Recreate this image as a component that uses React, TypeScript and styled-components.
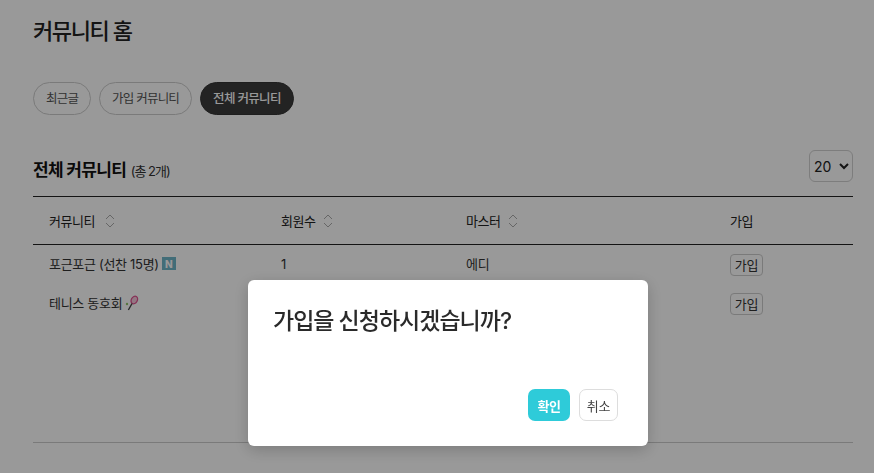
import React from "react";
import styled, { createGlobalStyle } from "styled-components";

const rows = [
  { name: "포근포근 (선찬 15명)", badge: "new", members: "1", master: "에디" },
  { name: "테니스 동호회", badge: "racket", members: "", master: "" },
];

const SortIcon = ({ wide }: { wide?: boolean }) => (
  <SortSvg $wide={wide} width="12" height="16" viewBox="0 0 12 16" fill="none">
    <path d="M2 6l4-4 4 4" stroke="#aaa" strokeWidth="1" />
    <path d="M2 10l4 4 4-4" stroke="#aaa" strokeWidth="1" />
  </SortSvg>
);

const RacketIcon = () => (
  <svg width="14" height="16" viewBox="0 0 14 16" fill="none">
    <circle cx="2" cy="9" r="1.2" fill="#8fc46a" />
    <ellipse cx="9.3" cy="5" rx="3" ry="4" transform="rotate(30 9.3 5)" stroke="#e0508f" strokeWidth="1.3" fill="#f6c6da" />
    <path d="M7 8.5L3.4 15" stroke="#444" strokeWidth="1.4" />
  </svg>
);

export default function App() {
  return (
    <>
      <GlobalStyle />
      <Page>
        <Title>커뮤니티 홈</Title>
        <Tabs>
          <Tab>최근글</Tab>
          <Tab>가입 커뮤니티</Tab>
          <Tab $active>전체 커뮤니티</Tab>
        </Tabs>
        <ListHead>
          <ListTitle>
            전체 커뮤니티 <small>(총 2개)</small>
          </ListTitle>
          <PageSize defaultValue="20">
            <option>20</option>
            <option>50</option>
          </PageSize>
        </ListHead>
        <Table>
          <colgroup>
            <col style={{ width: 232 }} />
            <col style={{ width: 185 }} />
            <col style={{ width: 264 }} />
            <col />
          </colgroup>
          <thead>
            <tr>
              <Th>
                커뮤니티 <SortIcon wide />
              </Th>
              <Th>
                회원수 <SortIcon />
              </Th>
              <Th>
                마스터 <SortIcon />
              </Th>
              <Th>가입</Th>
            </tr>
          </thead>
          <tbody>
            {rows.map((row) => (
              <tr key={row.name}>
                <Td>
                  <Name>
                    {row.name}
                    {row.badge === "new" ? <NewBadge>N</NewBadge> : <RacketIcon />}
                  </Name>
                </Td>
                <Td>{row.members}</Td>
                <Td>{row.master}</Td>
                <Td>
                  <JoinButton>가입</JoinButton>
                </Td>
              </tr>
            ))}
          </tbody>
        </Table>
        <Footer />
      </Page>
      <Overlay>
        <Modal>
          <ModalText>가입을 신청하시겠습니까?</ModalText>
          <ModalActions>
            <ConfirmButton>확인</ConfirmButton>
            <CancelButton>취소</CancelButton>
          </ModalActions>
        </Modal>
      </Overlay>
    </>
  );
}

const GlobalStyle = createGlobalStyle`
  html, body {
    margin: 0;
    height: 100%;
    overflow: hidden;
    background: #fff;
    font-family: Inter, "Noto Sans CJK KR", sans-serif;
    color: #222;
  }
`;

const Page = styled.div`
  height: 473px;
  padding: 0 21px 0 33px;
  box-sizing: border-box;
  display: flex;
  flex-direction: column;
`;

const Title = styled.h1`
  margin: 16px 0 0;
  font-size: 22px;
  line-height: 30px;
  font-weight: 500;
  letter-spacing: -1.4px;
  color: #222;
`;

const Tabs = styled.div`
  display: flex;
  gap: 8px;
  margin-top: 36px;
`;

const Tab = styled.button<{ $active?: boolean }>`
  height: 33px;
  padding: 0 12px 2px;
  border-radius: 17px;
  border: 1px solid ${(p) => (p.$active ? "#333" : "#ccc")};
  background: ${(p) => (p.$active ? "#3b3b3b" : "#fff")};
  color: ${(p) => (p.$active ? "#fff" : "#555")};
  font: ${(p) => (p.$active ? 500 : 400)} 12.5px Inter, "Noto Sans CJK KR", sans-serif;
  letter-spacing: ${(p) => (p.$active ? -0.65 : -0.8)}px;
`;

const ListHead = styled.div`
  display: flex;
  justify-content: space-between;
  align-items: flex-start;
  margin-top: 35px;
  height: 46px;
`;

const ListTitle = styled.h2`
  margin: 8px 0 0;
  font-size: 17px;
  line-height: 24px;
  font-weight: 700;
  letter-spacing: -0.65px;
  color: #111;

  small {
    margin-left: 1px;
    font-size: 13px;
    font-weight: 400;
    letter-spacing: -1px;
    color: #333;
  }
`;

const PageSize = styled.select`
  width: 44px;
  height: 32px;
  padding: 0;
  border: 1px solid #d0d0d0;
  border-radius: 6px;
  background: #fff;
  color: #222;
  font: 14px Inter, sans-serif;
`;

const Table = styled.table`
  width: 820px;
  border-collapse: collapse;
  table-layout: fixed;
  border-top: 1px solid #222;
`;

const Th = styled.th`
  height: 48px;
  padding: 0 16px 1px;
  box-sizing: border-box;
  border-bottom: 1px solid #222;
  text-align: left;
  font-size: 13px;
  font-weight: 400;
  letter-spacing: -0.5px;
  color: #222;
  white-space: nowrap;
`;

const SortSvg = styled.svg<{ $wide?: boolean }>`
  margin-left: ${(p) => (p.$wide ? 6 : 3)}px;
  vertical-align: -3px;
`;

const Td = styled.td`
  height: 39px;
  padding: 0 16px 1px;
  box-sizing: border-box;
  font-size: 13px;
  letter-spacing: -0.3px;
  color: #333;
  white-space: nowrap;
`;

const Name = styled.span`
  display: inline-flex;
  align-items: center;
  gap: 3px;
`;

const NewBadge = styled.span`
  display: inline-flex;
  align-items: center;
  justify-content: center;
  width: 14px;
  height: 13px;
  background: #6fb6c9;
  color: #fff;
  font-size: 10px;
  font-weight: 800;
  letter-spacing: 0;
`;

const JoinButton = styled.button`
  display: block;
  width: 33px;
  height: 22px;
  margin-top: 2px;
  padding: 0;
  border: 1px solid #ccc;
  border-radius: 4px;
  background: #fff;
  color: #333;
  font: 13px Inter, "Noto Sans CJK KR", sans-serif;
  letter-spacing: -0.3px;
`;

const Footer = styled.div`
  margin-top: auto;
  margin-bottom: 30px;
  border-top: 1px solid #ccc;
`;

const Overlay = styled.div`
  position: fixed;
  inset: 0;
  background: rgba(0, 0, 0, 0.4);
`;

const Modal = styled.div`
  position: absolute;
  left: 248px;
  top: 280px;
  width: 400px;
  height: 166px;
  box-sizing: border-box;
  padding: 26px 30px 25px 25px;
  display: flex;
  flex-direction: column;
  justify-content: space-between;
  background: #fff;
  border-radius: 6px;
  box-shadow: 0 4px 16px rgba(0, 0, 0, 0.2);
`;

const ModalText = styled.p`
  margin: 0;
  font-size: 23px;
  line-height: 30px;
  font-weight: 500;
  letter-spacing: -1px;
  color: #2a2a2a;
`;

const ModalActions = styled.div`
  display: flex;
  justify-content: flex-end;
  gap: 9px;
`;

const ConfirmButton = styled.button`
  width: 42px;
  height: 32px;
  padding: 0;
  border: none;
  border-radius: 7px;
  background: #2ecbd9;
  color: #fff;
  font: 700 13px Inter, "Noto Sans CJK KR", sans-serif;
  letter-spacing: -0.4px;
`;

const CancelButton = styled.button`
  width: 39px;
  height: 32px;
  padding: 0;
  border: 1px solid #ddd;
  border-radius: 7px;
  background: #fff;
  color: #444;
  font: 13px Inter, "Noto Sans CJK KR", sans-serif;
  letter-spacing: -0.3px;
`;
